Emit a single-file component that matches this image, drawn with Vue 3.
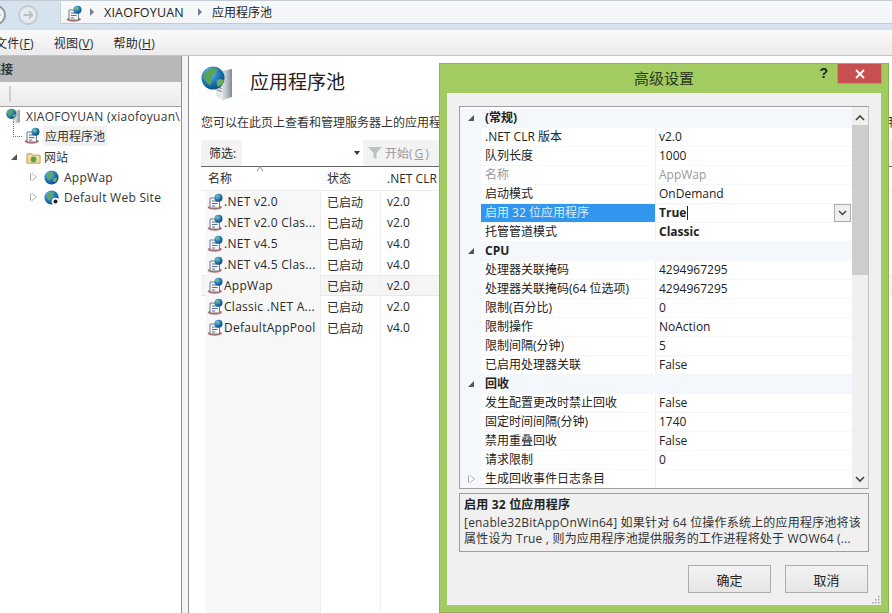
<script setup>
const pools = [
  { name: '.NET v2.0', clr: 'v2.0' },
  { name: '.NET v2.0 Clas...', clr: 'v2.0' },
  { name: '.NET v4.5', clr: 'v4.0' },
  { name: '.NET v4.5 Clas...', clr: 'v4.0' },
  { name: 'AppWap', clr: 'v2.0', active: true },
  { name: 'Classic .NET A...', clr: 'v2.0' },
  { name: 'DefaultAppPool', clr: 'v4.0' }
]

const props = [
  { group: true, name: '(常规)' },
  { name: '.NET CLR 版本', value: 'v2.0' },
  { name: '队列长度', value: '1000' },
  { name: '名称', value: 'AppWap', off: true },
  { name: '启动模式', value: 'OnDemand' },
  { name: '启用 32 位应用程序', value: 'True', bold: true, selected: true },
  { name: '托管管道模式', value: 'Classic', bold: true },
  { group: true, name: 'CPU' },
  { name: '处理器关联掩码', value: '4294967295' },
  { name: '处理器关联掩码(64 位选项)', value: '4294967295' },
  { name: '限制(百分比)', value: '0' },
  { name: '限制操作', value: 'NoAction' },
  { name: '限制间隔(分钟)', value: '5' },
  { name: '已启用处理器关联', value: 'False' },
  { group: true, name: '回收' },
  { name: '发生配置更改时禁止回收', value: 'False' },
  { name: '固定时间间隔(分钟)', value: '1740' },
  { name: '禁用重叠回收', value: 'False' },
  { name: '请求限制', value: '0' },
  { name: '生成回收事件日志条目', value: '', sub: true }
]
</script>

<template>
  <div class="page">
    <svg width="0" height="0" class="defs">
      <defs>
        <radialGradient id="globe" cx="35%" cy="30%" r="75%">
          <stop offset="0" stop-color="#7fc4ee" />
          <stop offset="0.55" stop-color="#1f78b8" />
          <stop offset="1" stop-color="#0d4a7c" />
        </radialGradient>
        <linearGradient id="tower" x1="0" y1="0" x2="1" y2="0">
          <stop offset="0" stop-color="#f2f4f5" />
          <stop offset="0.6" stop-color="#c5cbd0" />
          <stop offset="1" stop-color="#7f8a92" />
        </linearGradient>
        <symbol id="pool" viewBox="0 0 18 18">
          <path d="M1.500 14.500c2 2.800 11.500 3 14.500.3l-1-1.800H3z" fill="#c96a6a" />
          <path d="M4 5h9.500v10H4z" fill="#f3f5f6" stroke="#6f7f8c" />
          <path d="M6 8h5.500M6 10.500h5.500M6 13h3" stroke="#5f7080" />
          <circle cx="12.500" cy="4.800" r="4" fill="url(#globe)" />
          <path d="M10.500 3.300c1.500-1 3-.5 3.500.5-.5 1-1.500 1-2 1.800-.8-.2-1.500-1-1.500-2.300z" fill="#6fb16c" />
        </symbol>
        <symbol id="site" viewBox="0 0 18 18">
          <circle cx="9" cy="9" r="7.500" fill="url(#globe)" />
          <path d="M4 6c2-2.500 5-3 7-2 .5 1.500-1.500 2-2.500 3.500C7.500 9 8.500 11 7 12.500 5 11.500 4 8.500 4 6z" fill="#5fa85e" />
          <path d="M11 10c1.500-.5 3-.5 4 0-.5 2-1.500 3.500-3 4-1-1-1.500-2.500-1-4z" fill="#6fb16c" />
        </symbol>
        <symbol id="server" viewBox="0 0 36 36">
          <path d="M15 7l16-3v28l-9 3-7-4z" fill="url(#tower)" />
          <path d="M15 7l7 3v25l-7-4z" fill="#e6e9eb" />
          <path d="M16 13l5 1.500M16 16l5 1.500M16 19l5 1.500M16 22l5 1.500M16 25l5 1.500" stroke="#7e8b95" stroke-width="1.200" />
          <circle cx="12" cy="13" r="11.500" fill="url(#globe)" />
          <path d="M3 10c3-6 9-8 13-6 1 3-3 4-5 7-1 3 1 6-2 9-4-2-6-6-6-10z" fill="#58a356" />
          <path d="M16 15c2-1 5-1 7 0-1 4-3 6-6 7-1-2-2-4-1-7z" fill="#69ad63" />
        </symbol>
      </defs>
    </svg>

    <header class="nav">
      <div class="nav-buttons">
        <span class="round back">
          <svg width="16" height="16" viewBox="0 0 18 18"><path d="M14 9H4M8 5L4 9l4 4" fill="none" stroke="#9aa3aa" stroke-width="2" /></svg>
        </span>
        <span class="round">
          <svg width="16" height="16" viewBox="0 0 18 18"><path d="M4 9h10M10 5l4 4-4 4" fill="none" stroke="#b8c0c6" stroke-width="2" /></svg>
        </span>
      </div>
      <div class="address">
        <svg class="addr-icon" width="18" height="18"><use href="#pool" /></svg>
        <i class="crumb"></i>
        <span class="crumb-host">XIAOFOYUAN</span>
        <i class="crumb second"></i>
        <span class="crumb-text">应用程序池</span>
      </div>
    </header>

    <nav class="menu">
      <span class="menu-file">文件(<u>F</u>)</span>
      <span>视图(<u>V</u>)</span>
      <span>帮助(<u>H</u>)</span>
    </nav>

    <main class="workspace">
      <aside class="side">
        <div class="side-title"><span>连接</span></div>
        <div class="side-tools"><i></i></div>
        <div class="tree">
          <div class="node root">
            <svg width="16" height="16"><use href="#server" /></svg>
            <span class="latin">XIAOFOYUAN (xiaofoyuan\</span>
          </div>
          <div class="node pools">
            <svg width="18" height="18"><use href="#pool" /></svg>
            <span class="picked">应用程序池</span>
          </div>
          <div class="node sites">
            <b class="open"></b>
            <svg width="15" height="15" viewBox="0 0 16 16">
              <path d="M1 4h5l1 1.500h8V14H1z" fill="#f1dc9c" stroke="#b89d58" />
              <circle cx="8" cy="10" r="3" fill="#5c9f4f" />
            </svg>
            <span>网站</span>
          </div>
          <div class="node leaf">
            <b class="closed"></b>
            <svg width="17" height="17"><use href="#site" /></svg>
            <span class="latin">AppWap</span>
          </div>
          <div class="node leaf">
            <b class="closed"></b>
            <svg width="17" height="17" viewBox="0 0 17 17">
              <use href="#site" width="17" height="17" />
              <circle cx="12.500" cy="12.500" r="3.800" fill="#fff" />
              <circle cx="12.500" cy="12.500" r="2" fill="#222" />
            </svg>
            <span class="latin">Default Web Site</span>
          </div>
        </div>
      </aside>

      <section class="content">
        <div class="heading">
          <svg width="36" height="36"><use href="#server" /></svg>
          <h1>应用程序池</h1>
        </div>
        <p class="intro">您可以在此页上查看和管理服务器上的应用程序池列表。应用程序池与工作进程相关联，包含一个或多个应用程序，并提供不同应用程序之间的隔离。</p>
        <div class="filter">
          <span class="filter-label">筛选:</span>
          <span class="filter-input"><i></i></span>
          <span class="go">
            <svg width="16" height="14" viewBox="0 0 16 14"><path d="M1 1h14L9.500 7v6l-3-1.500V7z" fill="#bcc3c8" /></svg>
            开始(<u>G</u>)
          </span>
        </div>
        <div class="list">
          <div class="list-head">
            <span class="col-name">名称<i class="sort"></i></span>
            <span class="col-state">状态</span>
            <span class="col-clr">.NET CLR 版本</span>
          </div>
          <div class="list-body">
            <div v-for="pool in pools" :key="pool.name" class="pool" :class="{ active: pool.active }">
              <span class="col-name">
                <svg width="18" height="18"><use href="#pool" /></svg>{{ pool.name }}
              </span>
              <span class="col-state">已启动</span>
              <span class="col-clr">{{ pool.clr }}</span>
            </div>
            <div class="pool filler">
              <span class="col-name"></span>
              <span class="col-state"></span>
              <span class="col-clr"></span>
            </div>
          </div>
        </div>
      </section>
    </main>

    <div class="dialog">
      <div class="dialog-bar">
        <span class="dialog-title">高级设置</span>
        <span class="help">?</span>
        <span class="close">
          <svg width="10" height="10" viewBox="0 0 10 10"><path d="M1 1l8 8M9 1l-8 8" stroke="#fff" stroke-width="1.800" /></svg>
        </span>
      </div>
      <div class="dialog-body">
        <div class="grid">
          <div class="rows">
            <div
              v-for="row in props"
              :key="row.name"
              class="row"
              :class="{ group: row.group, off: row.off, selected: row.selected }"
            >
              <span class="gutter"><b v-if="row.group" class="open"></b><b v-if="row.sub" class="closed"></b></span>
              <span class="row-name">{{ row.name }}</span>
              <span class="row-value" :class="{ strong: row.bold }">
                {{ row.value }}<i v-if="row.selected" class="caret"></i>
              </span>
              <span v-if="row.selected" class="combo">
                <svg width="9" height="6" viewBox="0 0 9 6"><path d="M1 1l3.500 3.500L8 1" fill="none" stroke="#444" stroke-width="1.500" /></svg>
              </span>
            </div>
          </div>
          <div class="scroll">
            <svg width="10" height="7" viewBox="0 0 10 7"><path d="M1 6l4-4 4 4" fill="none" stroke="#444" stroke-width="1.600" /></svg>
            <div class="track"><div class="thumb"></div></div>
            <svg width="10" height="7" viewBox="0 0 10 7"><path d="M1 1l4 4 4-4" fill="none" stroke="#444" stroke-width="1.600" /></svg>
          </div>
        </div>
        <div class="desc">
          <strong>启用 32 位应用程序</strong>
          <p>[enable32BitAppOnWin64] 如果针对 64 位操作系统上的应用程序池将该</p>
          <p>属性设为 True , 则为应用程序池提供服务的工作进程将处于 WOW64 (...</p>
        </div>
        <div class="actions">
          <button>确定</button>
          <button>取消</button>
        </div>
        <svg class="grip" width="9" height="9" viewBox="0 0 9 9">
          <path d="M7 1h1.500v1.500H7zM4 4h1.500v1.500H4zM7 4h1.500v1.500H7zM1 7h1.500v1.500H1zM4 7h1.500v1.500H4zM7 7h1.500v1.500H7z" fill="#a9a9a9" />
        </svg>
      </div>
    </div>
  </div>
</template>

<style>
html, body {
  margin: 0;
  overflow: hidden;
  background: #fff;
}
</style>

<style scoped>
.page {
  position: relative;
  width: 892px;
  height: 613px;
  overflow: hidden;
  font-family: "Open Sans", "Noto Sans CJK SC", sans-serif;
  font-size: 12px;
  color: #2a2a2a;
  background: #fff;
  display: flex;
  flex-direction: column;
}
.defs {
  position: absolute;
}

.nav {
  height: 30px;
  flex: none;
  display: flex;
  align-items: flex-start;
  background: #d6e3ef;
  border-top: 1px solid #c3ccd4;
  box-sizing: border-box;
}
.nav-buttons {
  width: 59px;
  flex: none;
  display: flex;
  gap: 5px;
  margin-left: -14px;
  padding-top: 4px;
}
.round {
  width: 20px;
  height: 20px;
  margin-left: 7px;
  box-sizing: border-box;
  display: flex;
  align-items: center;
  justify-content: center;
  border: 2px solid #c3ccd3;
  border-radius: 50%;
  background: #e4ebf0;
}
.round.back {
  margin-left: 0;
  border-color: #8e989f;
  background: #eff3f6;
}
.address {
  margin-left: 15px;
  height: 22px;
  flex: 1;
  display: flex;
  align-items: center;
  background: linear-gradient(#f7f9fa, #f3f5f7);
  border-left: 1px solid #c6d2dc;
  border-bottom: 1px solid #bfccd8;
}
.addr-icon {
  margin-left: 4px;
  margin-top: 3px;
}
.crumb {
  width: 0;
  height: 0;
  margin: 0 10px 0 7px;
  border-left: 4px solid #77808a;
  border-top: 4px solid transparent;
  border-bottom: 4px solid transparent;
}
.crumb.second {
  margin: 0 10px 0 14px;
}
.crumb-host {
  font-size: 12.500px;
  letter-spacing: .2px;
  color: #222;
}
.crumb-text {
  color: #222;
}

.menu {
  height: 26px;
  flex: none;
  display: flex;
  align-items: center;
  gap: 20px;
  padding-top: 1px;
  box-sizing: border-box;
  background: linear-gradient(#fafafa, #ebebeb);
  border-bottom: 1px solid #c4c4c4;
}
.menu-file {
  margin-left: -5px;
}
.menu span {
  font-size: 12px;
  letter-spacing: .3px;
}

.workspace {
  flex: 1;
  display: flex;
  min-height: 0;
  background: #f4f4f4;
}
.side {
  width: 182px;
  flex: none;
  box-sizing: border-box;
  border-right: 1px solid #8f8f8f;
  display: flex;
  flex-direction: column;
  overflow: hidden;
  background: #fff;
}
.side-title {
  height: 26px;
  flex: none;
  background: #b8b8b8;
  overflow: hidden;
  display: flex;
  align-items: center;
  font-weight: 600;
  color: #333;
}
.side-title span {
  margin-left: -11px;
}
.side-tools {
  height: 25px;
  flex: none;
  box-sizing: border-box;
  background: linear-gradient(#f7f7f7, #ebebeb);
  border-bottom: 1px solid #a0a0a0;
  display: flex;
  align-items: center;
  padding-left: 9px;
}
.side-tools i {
  width: 2px;
  height: 16px;
  background: #cfcfcf;
}
.tree {
  margin-top: -1px;
}
.node {
  height: 20px;
  position: relative;
  display: flex;
  align-items: center;
  white-space: nowrap;
  color: #333;
}
.latin {
  letter-spacing: .27px;
}
.root {
  padding-left: 6px;
  gap: 4px;
}
.pools {
  padding-left: 23px;
  gap: 3px;
}
.pools::before {
  content: '';
  position: absolute;
  left: 13px;
  top: -5px;
  width: 8px;
  height: 15px;
  border-left: 1px dotted #777;
  border-bottom: 1px dotted #777;
}
.picked {
  padding: 1px 2px;
  margin-left: -1px;
  background: #f2f2f2;
}
.sites {
  margin-top: 1px;
  padding-left: 11px;
  gap: 3px;
}
.sites .open {
  margin-right: 6px;
}
.leaf {
  padding-left: 31px;
  gap: 4px;
}
.leaf .closed {
  margin-right: 3px;
}
.open {
  display: block;
  width: 0;
  height: 0;
  border-bottom: 6px solid #555;
  border-left: 6px solid transparent;
}
.closed {
  display: block;
  width: 0;
  height: 0;
  border-left: 5px solid #fff;
  border-top: 4px solid transparent;
  border-bottom: 4px solid transparent;
  filter: drop-shadow(-1px 0 0 #a5a5a5) drop-shadow(1px 0 0 #a5a5a5);
}

.content {
  flex: 1;
  min-width: 0;
  margin-left: 6px;
  border-left: 1px solid #8f8f8f;
  padding-left: 12px;
  display: flex;
  flex-direction: column;
  white-space: nowrap;
  overflow: hidden;
  background: #fff;
}
.heading {
  height: 50px;
  flex: none;
  display: flex;
  align-items: center;
  gap: 13px;
}
.heading svg {
  margin-top: 3px;
}
.heading h1 {
  margin: 0;
  font-size: 19px;
  font-weight: 400;
  color: #222;
}
.intro {
  margin: 8px 0 0;
  height: 18px;
  line-height: 18px;
  flex: none;
  color: #333;
}
.filter {
  margin-top: 8px;
  height: 27px;
  flex: none;
  display: flex;
  align-items: center;
  background: #f3f3f3;
  border-bottom: 1px solid #666;
  box-sizing: border-box;
}
.filter-label {
  width: 41px;
  padding-left: 8px;
  box-sizing: border-box;
}
.filter-input {
  width: 121px;
  height: 26px;
  background: #fff;
  position: relative;
}
.filter-input i {
  position: absolute;
  right: 3px;
  top: 11px;
  width: 0;
  height: 0;
  border-top: 4px solid #333;
  border-left: 3px solid transparent;
  border-right: 3px solid transparent;
}
.go {
  display: flex;
  align-items: center;
  gap: 2px;
  margin-left: 4px;
  color: #9a9a9a;
}
.list {
  flex: 1;
  min-height: 0;
  display: flex;
  flex-direction: column;
}
.list-head {
  height: 24px;
  flex: none;
  display: flex;
  align-items: center;
  padding-bottom: 1px;
  border-bottom: 1px solid #ececec;
  box-sizing: border-box;
}
.list-head .col-name {
  position: relative;
  width: 120px;
  margin-left: 0;
  padding-left: 7px;
}
.sort {
  position: absolute;
  left: 56px;
  top: -1px;
  width: 5px;
  height: 5px;
  border-top: 1px solid #9a9a9a;
  border-left: 1px solid #9a9a9a;
  transform: rotate(45deg) skew(10deg, 10deg);
}
.col-name {
  width: 115px;
  margin-left: 5px;
  flex: none;
  box-sizing: border-box;
}
.col-state {
  width: 60px;
  flex: none;
  box-sizing: border-box;
  padding-left: 6px;
}
.col-clr {
  flex: 1;
  padding-left: 6px;
}
.list-body {
  flex: 1;
  display: flex;
  flex-direction: column;
  min-height: 0;
}
.pool {
  height: 21px;
  flex: none;
  display: flex;
  align-items: center;
}
.pool .col-name {
  height: 100%;
  display: flex;
  align-items: center;
  letter-spacing: .27px;
  background: #f7f7f7;
  border-right: 1px solid #ececec;
}
.pool .col-state {
  height: 100%;
  display: flex;
  align-items: center;
  border-right: 1px solid #f0f0f0;
}
.pool.active {
  background: #f5f5f5;
  box-shadow: inset 0 1px #e8e8e8, inset 0 -1px #e8e8e8;
}
.pool.filler {
  flex: 1;
}

.dialog {
  position: absolute;
  left: 439px;
  top: 63px;
  width: 450px;
  height: 550px;
  box-sizing: border-box;
  background: #a2cb62;
  border: 1px solid #8eb44f;
  padding: 0 7px 7px 7px;
  display: flex;
  flex-direction: column;
}
.dialog-bar {
  height: 29px;
  flex: none;
  position: relative;
  display: flex;
  align-items: center;
  justify-content: center;
}
.dialog-title {
  font-size: 15px;
  line-height: 20px;
  color: #2b3a1e;
  margin-top: -1px;
}
.help {
  position: absolute;
  right: 53px;
  top: 1px;
  font-size: 14px;
  font-weight: 700;
  color: #1e2a12;
  font-family: "Liberation Sans", sans-serif;
}
.close {
  position: absolute;
  right: -1px;
  top: 0;
  width: 45px;
  height: 20px;
  background: #c95050;
  border: 1px solid #b4a050;
  border-top: none;
  box-sizing: border-box;
  display: flex;
  align-items: center;
  justify-content: center;
}
.dialog-body {
  flex: 1;
  min-height: 0;
  position: relative;
  background: #f0f0f0;
  padding: 13px 12px 0 12px;
  display: flex;
  flex-direction: column;
}
.grid {
  height: 383px;
  flex: none;
  display: flex;
  border: 1px solid #a0a0a0;
  border-right-color: #c4c4c4;
  box-sizing: border-box;
  background: #fff;
}
.rows {
  flex: 1;
  min-width: 0;
  padding-top: 2px;
  overflow: hidden;
}
.row {
  height: 19px;
  display: flex;
  align-items: center;
  position: relative;
  font-size: 12px;
  line-height: 16px;
  color: #222;
  border-bottom: 1px solid #f6f6f6;
  box-sizing: border-box;
}
.gutter {
  width: 21px;
  height: 100%;
  flex: none;
  background: #f4f7fb;
  display: flex;
  align-items: center;
  padding-left: 8px;
  box-sizing: border-box;
}
.gutter .closed {
  margin-left: 1px;
}
.row-name {
  width: 175px;
  flex: none;
  height: 100%;
  display: flex;
  align-items: center;
  padding-left: 4px;
  box-sizing: border-box;
  border-right: 1px solid #f0f0f0;
  white-space: nowrap;
}
.row-value {
  flex: 1;
  padding-left: 3px;
  white-space: nowrap;
  display: flex;
  align-items: center;
}
.row.group {
  background: #f4f7fb;
  font-weight: 700;
}
.row.group .row-name {
  border-right: none;
}
.row.off {
  color: #9a9a9a;
}
.row.selected .row-name {
  background: #3296ee;
  color: #dceefc;
}
.strong {
  font-weight: 700;
}
.caret {
  width: 1px;
  height: 14px;
  background: #222;
  margin-left: 1px;
}
.combo {
  position: absolute;
  right: 1px;
  top: 0;
  width: 17px;
  height: 18px;
  box-sizing: border-box;
  border: 1px solid #acacac;
  background: #efefef;
  display: flex;
  align-items: center;
  justify-content: center;
}
.scroll {
  width: 16px;
  flex: none;
  display: flex;
  flex-direction: column;
  align-items: center;
  background: #f0f0f0;
  padding: 7px 0 5px;
  box-sizing: border-box;
}
.track {
  flex: 1;
  width: 100%;
  margin: 4px 0;
}
.thumb {
  height: 150px;
  background: #cdcdcd;
}
.desc {
  margin-top: 4px;
  height: 59px;
  flex: none;
  box-sizing: border-box;
  border: 1px solid #a0a0a0;
  padding: 3px 5px 0 4px;
  font-size: 12px;
  line-height: 16px;
  letter-spacing: .2px;
  white-space: nowrap;
  overflow: hidden;
  color: #333;
}
.desc strong {
  display: block;
  margin-bottom: 2px;
  color: #222;
}
.desc p {
  margin: 0;
}
.actions {
  margin-top: 13px;
  padding-right: 1px;
  display: flex;
  justify-content: flex-end;
  gap: 14px;
}
.actions button {
  width: 83px;
  height: 28px;
  border: 1px solid #acacac;
  background: linear-gradient(#f2f2f2, #e6e6e6);
  font-family: inherit;
  font-size: 13px;
  color: #222;
  padding: 0;
}
.grip {
  position: absolute;
  right: 1px;
  bottom: 1px;
}
</style>
